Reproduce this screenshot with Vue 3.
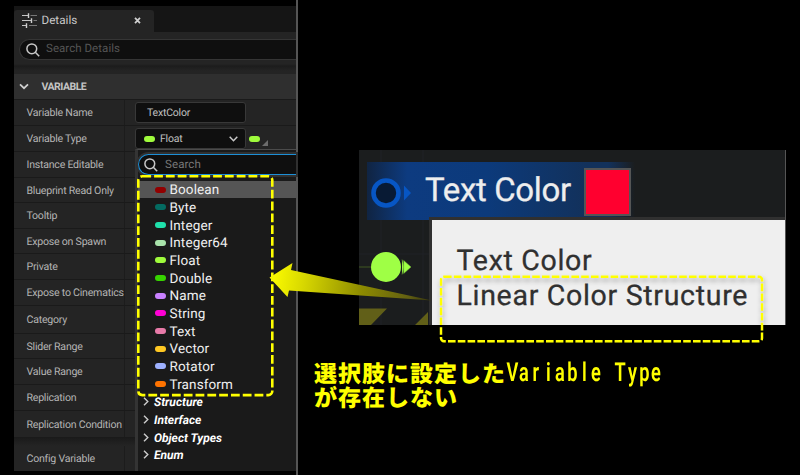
<script setup>
const rows = [
  { label: 'Variable Name', height: 26 },
  { label: 'Variable Type', height: 26 },
  { label: 'Instance Editable', height: 26 },
  { label: 'Blueprint Read Only', height: 25 },
  { label: 'Tooltip', height: 26 },
  { label: 'Expose on Spawn', height: 25 },
  { label: 'Private', height: 26 },
  { label: 'Expose to Cinematics', height: 26 },
  { label: 'Category', height: 28 },
  { label: 'Slider Range', height: 25 },
  { label: 'Value Range', height: 26 },
  { label: 'Replication', height: 26 },
  { label: 'Replication Condition', height: 27 },
]

const types = [
  { name: 'Boolean', color: '#920000' },
  { name: 'Byte', color: '#046b61' },
  { name: 'Integer', color: '#1fe0ab' },
  { name: 'Integer64', color: '#a9e3ab' },
  { name: 'Float', color: '#9ffb3c' },
  { name: 'Double', color: '#37d400' },
  { name: 'Name', color: '#c981ff' },
  { name: 'String', color: '#ff00d4' },
  { name: 'Text', color: '#e77aa8' },
  { name: 'Vector', color: '#ffc823' },
  { name: 'Rotator', color: '#9eb1ff' },
  { name: 'Transform', color: '#ff7300' },
]

const groups = ['Structure', 'Interface', 'Object Types', 'Enum']
const halfWidth = [...'Variable Type']
</script>

<template>
  <main class="stage">
    <section class="shot">
      <div class="panel">
        <header class="tabs">
          <div class="tab">
            <svg class="sliders" width="15" height="15" viewBox="0 0 15 15" fill="none">
              <path d="M0 2.5H6M0 7.5H9M0 12.5H4" stroke="#c4c4c4" stroke-width="1.2" />
              <path d="M6.5 .2V5M9.5 5.2V10M4.5 10.2V15" stroke="#d0d0d0" stroke-width="1.4" />
              <path d="M8.5 2.5H15M11.5 7.5H15M7 12.5H15" stroke="#777" stroke-width="1.2" />
            </svg>
            <span class="tab-name">Details</span>
            <svg class="close" width="7" height="7" viewBox="0 0 7 7"><path d="M1 .8L6 6.2M6 .8L1 6.2" stroke="#cfcfcf" stroke-width="1.7" /></svg>
          </div>
        </header>
        <div class="search-row">
          <div class="search">
            <svg width="14" height="14" viewBox="0 0 14 14" fill="none" stroke="#c8c8c8" stroke-width="1.5"><circle cx="5.8" cy="5.8" r="4.9" /><path d="M9.3 9.3L13.2 13.2" /></svg>
            <span>Search Details</span>
          </div>
        </div>
        <div class="section-head">
          <svg width="10" height="7" viewBox="0 0 10 7" fill="none" stroke="#d0d0d0" stroke-width="1.7"><path d="M1 1.3L5 5.2L9 1.3" /></svg>
          <span>VARIABLE</span>
        </div>
        <div class="props">
          <div v-for="(row, i) in rows" :key="row.label" class="row" :style="{ height: row.height + 'px' }">
            <span class="label">{{ row.label }}</span>
            <div class="value">
              <div v-if="i === 0" class="field"><span>TextColor</span></div>
              <template v-if="i === 1">
                <div class="field select">
                  <i class="pill float"></i><span>Float</span>
                  <svg width="9" height="6" viewBox="0 0 9 6" fill="none" stroke="#c8c8c8" stroke-width="1.5"><path d="M.7 .8L4.5 4.7L8.3 .8" /></svg>
                </div>
                <i class="pill float"></i>
                <svg class="corner" width="6" height="6" viewBox="0 0 6 6"><path d="M6 0V6H0Z" fill="#6c6c6c" /></svg>
              </template>
            </div>
          </div>
          <div class="gap"></div>
          <div class="row last"><span class="label">Config Variable</span><div class="value"></div></div>
        </div>
      </div>

      <div class="menu">
        <div class="menu-search">
          <svg width="14" height="14" viewBox="0 0 14 14" fill="none" stroke="#c8c8c8" stroke-width="1.5"><circle cx="5.8" cy="5.8" r="4.9" /><path d="M9.3 9.3L13.2 13.2" /></svg>
          <span>Search</span>
        </div>
        <div class="options">
          <div v-for="(t, i) in types" :key="t.name" class="option" :class="{ active: i === 0 }">
            <i class="pill" :style="{ background: t.color }"></i><span>{{ t.name }}</span>
          </div>
          <div v-for="g in groups" :key="g" class="option group">
            <svg width="6" height="9" viewBox="0 0 6 9" fill="none" stroke="#ccc" stroke-width="1.4"><path d="M1 .7L4.8 4.5L1 8.3" /></svg><span>{{ g }}</span>
          </div>
        </div>
      </div>
    </section>

    <section class="right">
      <div class="graph">
        <svg class="pins" width="73" height="175" viewBox="0 0 73 175">
          <path d="M22 0V175M64 0V175M0 104H73" stroke="#202326" stroke-width="1" />
          <path d="M0 117H12" stroke="#344421" stroke-width="1.5" />
          <circle cx="27" cy="117" r="15" fill="#9fff45" />
          <path d="M43 109.5Q46 117 43 124.5M44.7 110.5L52 117L44.7 123.5Z" fill="#9fff45" stroke="#72ba36" stroke-width=".5" />
          <path d="M0 158.5H28L12 175H0ZM56 175L69 162V175Z" fill="#615f18" />
        </svg>
        <div class="pin-row">
          <svg width="42" height="58" viewBox="0 0 42 58"><circle cx="19" cy="31" r="12.5" fill="#081a34" stroke="#0756c4" stroke-width="4.6" /><path d="M37 23.5L44 31L37 38.5Z" fill="#0756c4" /></svg>
          <span class="pin-text">Text Color</span>
          <div class="swatch"></div>
        </div>
        <div class="tooltip">
          <p>Text Color</p>
          <p class="second">Linear Color Structure</p>
        </div>
      </div>
      <div class="caption">
        <div class="line"><span>選択肢に設定した</span><span class="half"><i v-for="(c, i) in halfWidth" :key="i"><b>{{ c }}</b></i></span></div>
        <div class="line"><span>が存在しない</span></div>
      </div>
    </section>

    <svg class="marks" width="800" height="475" viewBox="0 0 800 475" fill="none">
      <defs>
        <linearGradient id="arrow" gradientUnits="userSpaceOnUse" x1="275" y1="278" x2="432" y2="300">
          <stop offset="0" stop-color="#f8f800" /><stop offset=".18" stop-color="#d8d800" /><stop offset=".55" stop-color="#8d8b00" /><stop offset=".85" stop-color="#625f12" /><stop offset="1" stop-color="#35340c" />
        </linearGradient>
        <filter id="shade" x="-10%" y="-20%" width="120%" height="150%"><feDropShadow dx="1" dy="3" stdDeviation="2.5" flood-color="#000" flood-opacity=".35" /></filter>
      </defs>
      <rect x="138.3" y="176.3" width="134" height="218.8" rx="4" stroke="#ff0" stroke-width="2.6" stroke-dasharray="8.8 3" />
      <rect x="441" y="276.8" width="321" height="64.4" rx="3" stroke="#ff0" stroke-width="2.4" stroke-dasharray="7.6 2.2" filter="url(#shade)" />
      <path d="M269.5 277.5L292.5 263L291 270L432 300.5L289 290.5L287.5 297Z" fill="url(#arrow)" />
    </svg>
  </main>
</template>

<style>
body { margin: 0; background: #000; }
</style>

<style scoped>
* { box-sizing: border-box; }
.stage { position: relative; display: flex; width: 800px; height: 475px; overflow: hidden; background: #000; font-family: Roboto, sans-serif; text-rendering: geometricPrecision; }
.shot { position: relative; width: 298px; height: 475px; padding: 6px 0 4px 14px; border-right: 2px solid #555; flex: none; }
.panel { height: 465px; background: #242424; overflow: hidden; color: #c0c0c0; }
.tabs { height: 26px; background: #151515; padding-top: 4px; }
.tab { display: flex; align-items: center; width: 140px; height: 22px; padding-left: 8px; background: #242424; border-radius: 3px 3px 0 0; }
.sliders { margin-top: -2px; }
.tab-name { width: 92px; margin-left: 4.5px; font-size: 11.7px; color: #c8c8c8; margin-top: -2px; }
.close { margin: -2px 0 0 .5px; }
.search-row { height: 42px; padding: 7px 0 0 5px; background: linear-gradient(#242424 32px, #1c1c1c 34px, #242424 39px); }
.search { display: flex; align-items: center; gap: 6px; height: 21px; padding-left: 6px; background: #0f0f0f; border: 1px solid #353535; border-right: 0; border-radius: 11px 0 0 11px; font-size: 11.5px; letter-spacing: .05px; color: #555; }
.search span { margin-top: -3px; }
.section-head { display: flex; align-items: center; gap: 12.5px; height: 26px; padding-left: 5px; background: #2f2f2f; border-bottom: 1px solid #1a1a1a; font-size: 10.5px; font-weight: 700; letter-spacing: -.5px; color: #c4c4c4; }
.row { display: grid; grid-template-columns: 111px 1fr; border-bottom: 1px solid #1a1a1a; }
.label { display: flex; align-items: center; padding-left: 12.5px; border-right: 1px solid #1c1c1c; font-size: 10.6px; letter-spacing: -.24px; color: #b4b4b4; white-space: nowrap; }
.value { display: flex; align-items: center; padding-left: 10px; }
.field { width: 111px; height: 21px; padding-left: 11px; display: flex; align-items: center; background: #0f0f0f; border: 1px solid #383838; border-radius: 3px; font-size: 10.5px; letter-spacing: -.2px; color: #c0c0c0; }
.field > span { margin-top: -1px; }
.select { padding: 0 7px 0 8px; }
.select span { flex: 1; margin: 0 0 0 5px; }
.pill { display: block; width: 11px; height: 6px; border-radius: 3px; flex: none; }
.float { background: #9ffb3c; }
.value > .pill { margin-left: 3px; }
.corner { margin: 9px 0 0 2px; }
.gap { height: 8px; background: linear-gradient(#1b1b1b, #242424); }
.last { height: 25px; border-bottom: 0; }
.menu { position: absolute; left: 135px; top: 149px; width: 161px; height: 322px; padding-top: 4px; background: #1a1a1a; border-left: 3px solid #343434; border-top: 1px solid #4b4b4b; }
.menu-search { display: flex; align-items: center; gap: 7px; height: 21px; padding-left: 5px; background: #0f0f0f; border: 1px solid #1d8fd6; border-right: 0; border-radius: 11px 0 0 11px; box-shadow: 0 0 0 2px #303030; font-size: 11.5px; letter-spacing: .1px; color: #777; }
.menu-search span { margin-top: -2px; }
.options { padding-top: 5.8px; }
.option { display: flex; align-items: center; gap: 3.5px; height: 17.68px; padding-left: 17px; font-size: 13.5px; letter-spacing: .12px; color: #f0f0f0; white-space: nowrap; }
.option span { padding-top: 1.5px; }
.active { background: #555; }
.group { gap: 5px; padding-left: 5px; font-size: 12px; font-style: italic; font-weight: 700; color: #fff; letter-spacing: 0; }
.right { width: 502px; padding: 150px 0 0 61px; }
.graph { position: relative; width: 427px; height: 175px; padding-top: 12px; border-right: 1px solid #555; background: #1b1d1e; overflow: hidden; }
.pins { position: absolute; left: 0; top: 0; }
.pin-row { position: relative; display: flex; height: 58px; width: 268px; margin-left: 8px; background: linear-gradient(90deg, #102442, #0d3b80 15%, #0c3a7b 45%, #12315b 82%, #12315b 90%, #1b1d1e); }
.pin-row svg { overflow: visible; flex: none; }
.pin-text { width: 159px; margin-left: 16px; font-size: 33px; line-height: 58px; letter-spacing: -.35px; color: #eee; white-space: nowrap; -webkit-text-stroke: .3px #eee; }
.swatch { width: 47px; height: 48px; margin-top: 6px; border: 2px solid #555; background: #ff002f; flex: none; }
.tooltip { position: relative; height: 105px; margin-left: 73px; padding: 23px 0 0 24.5px; background: #efefef; box-shadow: 0 0 0 3px #303030; color: #303030; }
.tooltip p { margin: 0; font-size: 28.5px; line-height: 35px; letter-spacing: .7px; white-space: nowrap; -webkit-text-stroke: .3px #303030; }
.caption { width: 360px; margin: 35px 0 0 -45px; color: #ff0; font: 900 23px/24px 'Noto Sans CJK JP', sans-serif; letter-spacing: 1px; }
.line { display: flex; height: 24px; white-space: nowrap; }
.half { display: flex; letter-spacing: 0; font-family: Roboto, sans-serif; }
.half i { display: flex; justify-content: center; width: 12px; font-style: normal; }
.half b { padding-top: 1px; font-size: 26px; font-weight: 600; white-space: pre; transform: scaleX(.7); }
.marks { position: absolute; left: 0; top: 0; pointer-events: none; }
</style>
